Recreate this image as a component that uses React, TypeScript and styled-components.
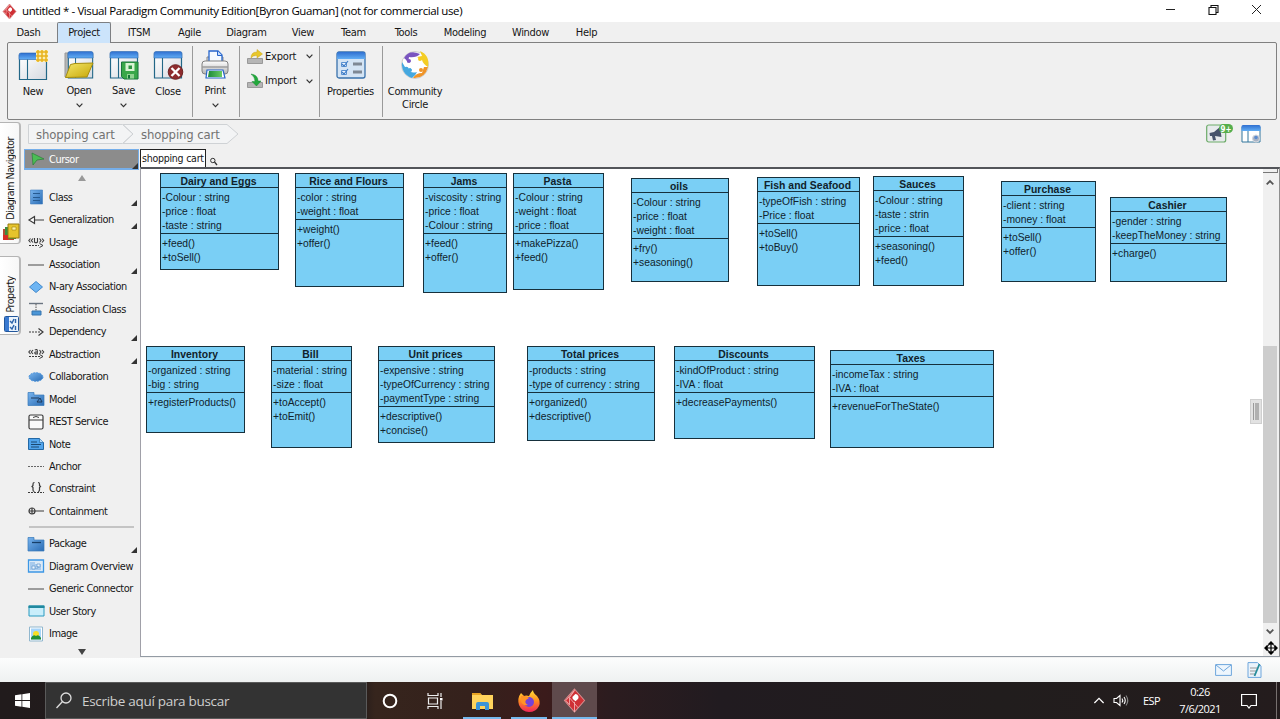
import React from "react";
import styled, { createGlobalStyle, css } from "styled-components";

const ui = '"DejaVu Sans Condensed", "DejaVu Sans", sans-serif';
const segoe = '"Open Sans", "Noto Sans", sans-serif';

const Global = createGlobalStyle`
  * { box-sizing: border-box; }
  body { margin: 0; overflow: hidden; background: #f0f0f0; }
  svg { display: block; flex: none; overflow: visible; }
`;

const Window = styled.div`
  display: flex;
  flex-direction: column;
  width: 1280px;
  height: 719px;
  background: #f0f0f0;
  color: #161616;
  font-family: ${ui};
  font-size: 11px;
  font-stretch: condensed;
  white-space: nowrap;
`;

/* Title bar */
const TitleBar = styled.header`
  display: flex;
  align-items: center;
  height: 22px;
  padding-left: 2px;
  background: #fff;
`;
const Title = styled.span`
  flex: 1;
  margin-left: 5px;
  font: 11.5px/20px ${segoe};
  letter-spacing: -0.4px;
  color: #000;
`;
const WindowButtons = styled.div`
  display: flex;
  gap: 30px;
  padding-right: 17px;
  align-self: flex-start;
  padding-top: 3px;
`;

/* Menu */
const MenuBar = styled.nav`
  display: flex;
  height: 20px;
  position: relative;
  z-index: 1;
  letter-spacing: -0.3px;
`;
const MenuItem = styled.div<{ $w: number; $active?: boolean }>`
  width: ${(p) => p.$w}px;
  text-align: center;
  line-height: 21px;
  ${(p) =>
    p.$active &&
    css`
      height: 21px;
      background: #cce4fb;
      border: 1px solid #7d7f82;
      border-bottom: 0;
      border-radius: 2px 2px 0 0;
      line-height: 19px;
    `}
`;

/* Ribbon */
const Ribbon = styled.section`
  display: flex;
  height: 78px;
  margin: 0 3px 0 7px;
  border: 1px solid #808080;
  border-radius: 2px;
`;
const Group = styled.div<{ $w: number; $last?: boolean }>`
  display: flex;
  width: ${(p) => p.$w}px;
  height: 71px;
  margin-top: 3px;
  border-right: ${(p) => (p.$last ? "0" : "1px solid #9a9a9a")};
`;
const BigButton = styled.div<{ $w: number }>`
  display: flex;
  flex-direction: column;
  align-items: center;
  width: ${(p) => p.$w}px;
  padding: 4px 0 0 1px;
  text-align: center;
`;
const BigLabel = styled.span<{ $low?: boolean }>`
  margin: ${(p) => (p.$low ? 5 : 4)}px 0 6px;
  line-height: 13px;
  letter-spacing: -0.32px;
`;
const SmallStack = styled.div`
  display: flex;
  flex-direction: column;
  padding-left: 7px;
  margin-top: -2px;
`;
const SmallButton = styled.div`
  display: flex;
  align-items: center;
  width: 66px;
  height: 24.5px;
  gap: 2px;
  & > span { width: 40px; letter-spacing: -0.2px; }
`;

/* Body */
const Body = styled.main`
  display: flex;
  height: 538px;
`;
const Rail = styled.aside`
  display: flex;
  flex-direction: column;
  width: 23px;
  padding-top: 2px;
  gap: 12px;
`;
const RailTab = styled.div<{ $h: number }>`
  display: flex;
  flex-direction: column;
  align-items: center;
  justify-content: flex-end;
  width: 21px;
  height: ${(p) => p.$h}px;
  padding: 0 0 2px 1px;
  gap: 3px;
  border: 1px solid #b4b4b4;
  border-left: 0;
  border-right: 2px solid #b9b9b9;
  border-radius: 0 4px 4px 0;
  background: linear-gradient(90deg, #fff, #f7f7f7);
  & > svg { margin-left: 2px; }
`;
const RailText = styled.span`
  writing-mode: vertical-rl;
  transform: rotate(180deg);
  font-size: 10.5px;
  line-height: 14px;
  letter-spacing: -0.42px;
`;
const Main = styled.div`
  display: flex;
  flex-direction: column;
  width: 1257px;
`;
const CrumbBar = styled.div`
  display: flex;
  justify-content: space-between;
  height: 29px;
  padding: 3px 19px 0 5px;
`;
const Crumbs = styled.div`
  display: flex;
  height: 22px;
`;
const Crumb = styled.div<{ $w: number }>`
  display: grid;
  width: ${(p) => p.$w}px;
  & > * { grid-area: 1 / 1; }
  & > span {
    padding-left: 8px;
    color: #727272;
    font-size: 13px;
    line-height: 23px;
    letter-spacing: -0.12px;
  }
`;
const CrumbActions = styled.div`
  display: flex;
  gap: 8px;
`;
const Workspace = styled.div`
  display: flex;
  height: 509px;
`;

/* Palette */
const Palette = styled.aside`
  width: 117px;
`;
const CursorRow = styled.div`
  display: flex;
  align-items: center;
  position: relative;
  width: 115px;
  height: 21px;
  margin: 0 0 0 1px;
  padding-left: 5px;
  gap: 4px;
  background: #8c8c8c;
  border: 2px solid #75aeea;
  border-width: 1px 1px 2px;
  color: #fff;
`;
const ArrowRow = styled.div<{ $h: number }>`
  display: flex;
  justify-content: center;
  align-items: center;
  height: ${(p) => p.$h}px;
`;
const Tool = styled.div`
  display: flex;
  align-items: center;
  position: relative;
  height: 22.45px;
  padding-left: 5px;
  gap: 5px;
  & > svg { width: 16px; height: 16px; }
`;
const ToolLabel = styled.span`
  padding-top: 1px;
  line-height: 14px;
  font-size: 10.9px;
  letter-spacing: -0.46px;
`;
const Corner = styled.i<{ $row?: boolean }>`
  position: absolute;
  right: ${(p) => (p.$row ? 0 : 3)}px;
  bottom: ${(p) => (p.$row ? -1 : 2)}px;
  border: 3.5px solid;
  border-color: transparent #333 #333 transparent;
`;
const Divider = styled.hr`
  height: 2px;
  margin: 3px 6px 5px;
  border: 0;
  background: #c4c4c4;
`;

/* Diagram */
const Editor = styled.section`
  width: 1140px;
`;
const Tabs = styled.div`
  display: flex;
  height: 18px;
  gap: 4px;
`;
const Tab = styled.div`
  width: 66px;
  padding-left: 1px;
  border: 1px solid #222;
  border-bottom: 0;
  background: #fff;
  font-size: 10.5px;
  line-height: 17px;
  letter-spacing: -0.24px;
`;
const CanvasFrame = styled.div`
  display: flex;
  height: 490px;
  border-top: 2px solid #53555a;
  border-left: 1px solid #a0a0a8;
  border-bottom: 1px solid #939ba4;
  border-right: 1px solid #8f8f8f;
`;
const Canvas = styled.div`
  position: relative;
  flex: 1;
  background: #fff;
`;
const Handle = styled.div`
  position: absolute;
  right: 1px;
  top: 230px;
  display: flex;
  justify-content: center;
  gap: 1px;
  width: 12px;
  height: 25px;
  padding: 3px 2px;
  border: 1px solid #cfcfcf;
  background: #e2e2e2;
  &::before { content: ""; width: 1px; background: #9a9a9a; }
  &::after { content: ""; width: 4px; background: #b0b0b0; }
`;
const ScrollBar = styled.div`
  display: flex;
  flex-direction: column;
  align-items: flex-start;
  width: 16px;
  background: #f0f0f0;
`;
const SplitNub = styled.div`
  width: 15px;
  height: 4px;
  border-bottom: 1px solid #777;
  border-right: 1px solid #777;
`;
const ScrollButton = styled.div<{ $h: number; $w?: number }>`
  display: flex;
  align-items: center;
  justify-content: center;
  width: ${(p) => p.$w ?? 14}px;
  height: ${(p) => p.$h}px;
`;
const Track = styled.div`
  display: flex;
  flex-direction: column;
  justify-content: flex-end;
  flex: 1;
  width: 14px;
`;
const Thumb = styled.div`
  height: 277px;
  background: #cdcdcd;
`;

const Node = styled.article<{ $x: number; $y: number; $w: number; $h: number }>`
  position: absolute;
  left: ${(p) => p.$x - 141}px;
  top: ${(p) => p.$y - 169}px;
  width: ${(p) => p.$w}px;
  height: ${(p) => p.$h}px;
  border: 1px solid #16303c;
  background: #7acff5;
  color: #10222b;
  font: 10.3px/14px "Liberation Sans", Arial, sans-serif;
  letter-spacing: 0.01px;
`;
const NodeTitle = styled.h3`
  height: 14px;
  margin: 0;
  padding-right: 2px;
  border-bottom: 1px solid #16303c;
  font-size: 10.4px;
  line-height: 15px;
  text-align: center;
  letter-spacing: 0.04px;
`;
const Compartment = styled.div<{ $line?: boolean }>`
  padding: 3px 0 0 1px;
  border-bottom: ${(p) => (p.$line ? "1px solid #16303c" : "0")};
  & > div { height: 14px; }
`;

/* Status and taskbar */
const StatusBar = styled.div`
  display: flex;
  justify-content: flex-end;
  align-items: center;
  height: 24px;
  padding: 0 18px 1px 0;
  gap: 15px;
  background: linear-gradient(#fcfdfd, #eef1f1);
`;
const Taskbar = styled.footer`
  display: flex;
  height: 37px;
  background: linear-gradient(90deg, #211b1c 0, #241c1b 360px, #36251d 375px, #35211c 470px, #3b1b1b 545px, #2c1c1f 610px, #211b20 720px, #211d1d 1000px, #241c1d 1280px);
  color: #fff;
  font-family: ${segoe};
  font-stretch: normal;
`;
const Start = styled.div`
  display: flex;
  align-items: center;
  width: 45px;
  padding-left: 15px;
`;
const Search = styled.div`
  display: flex;
  align-items: center;
  width: 322px;
  padding-left: 10px;
  gap: 10px;
  border: 1px solid #5a5a5a;
  background: #333;
  color: #cfcfcf;
  font-size: 13.5px;
  letter-spacing: -0.3px;
`;
const TaskButton = styled.div<{ $w: number; $open?: boolean; $active?: boolean }>`
  display: flex;
  align-items: center;
  justify-content: center;
  position: relative;
  width: ${(p) => p.$w}px;
  background: ${(p) => (p.$active ? "#5f4a4c" : "transparent")};
  &::after {
    content: "";
    display: ${(p) => (p.$open ? "block" : "none")};
    position: absolute;
    bottom: 0;
    left: ${(p) => (p.$active ? 0 : 5)}px;
    right: ${(p) => (p.$active ? 0 : 5)}px;
    height: 2px;
    background: #76b9ed;
  }
`;
const Tray = styled.div`
  display: flex;
  align-items: center;
  margin-left: auto;
  padding-right: 3px;
  font-size: 11px;
  & > svg + svg { margin-left: 8px; }
`;
const Lang = styled.span`
  width: 19px;
  margin: 0 14px 0 13px;
  letter-spacing: -0.6px;
`;
const Clock = styled.div`
  width: 48px;
  margin-right: 17px;
  text-align: center;
  line-height: 16.500px;
  letter-spacing: -0.55px;
`;
const ShowDesktop = styled.div`
  width: 1px;
  height: 37px;
  margin-left: 19px;
  background: #77706f;
`;

const Logo = ({ size }: { size: number }) => (
  <svg width={size} height={size} viewBox="0 0 16 16">
    <path d="M8 0 15 8 8 16 1 8Z" fill="#cf3035" stroke="#d98f90" strokeWidth=".7" />
    <path d="M6.500 5.500 8.600 3.400C10.400 3.600 11.400 5.400 10.400 7L8.700 8.600 6.800 7z" fill="#fff" />
    <path d="M8 1 4.500 6v5L2 8ZM4.500 6l6 7M8 16V9" fill="none" stroke="#f2b3b3" strokeWidth=".6" />
  </svg>
);

const Chevron = ({ w = 7, color = "#333", up = false, stroke = 1.4 }) => (
  <svg width={w} height={w / 2 + 1} viewBox="0 0 8 5" fill="none" stroke={color} strokeWidth={stroke}>
    <path d={up ? "M.7 4.300 4 1 7.300 4.300" : "M.7.7 4 4 7.300.7"} />
  </svg>
);

const Defs = styled.svg`
  position: absolute;
`;
const Grads = () => (
  <Defs width="0" height="0">
    <defs>
      <linearGradient id="blue" x2="0" y2="1"><stop stopColor="#2f6fd0" /><stop offset="1" stopColor="#62aef5" /></linearGradient>
      <linearGradient id="pane" x2="1" y2="1"><stop stopColor="#fff" /><stop offset="1" stopColor="#d5d9e0" /></linearGradient>
      <linearGradient id="gold" x2="1" y2="1"><stop stopColor="#f4e76a" /><stop offset="1" stopColor="#c6a606" /></linearGradient>
      <linearGradient id="green" x2="1" y2="0"><stop stopColor="#1d8a3c" /><stop offset="1" stopColor="#68cb62" /></linearGradient>
      <linearGradient id="tool" x2="1" y2="1"><stop stopColor="#78b4ee" /><stop offset="1" stopColor="#2a6cb4" /></linearGradient>
      <linearGradient id="grey" x2="0" y2="1"><stop stopColor="#fff" /><stop offset="1" stopColor="#b4b4b4" /></linearGradient>
      <linearGradient id="fox" x2="0" y2="1"><stop stopColor="#ffe13a" /><stop offset=".5" stopColor="#ff8a1f" /><stop offset="1" stopColor="#f0245c" /></linearGradient>
    </defs>
  </Defs>
);

const Pane = () => (
  <>
    <path d="M1.5 4h27v24h-27z" fill="url(#pane)" stroke="#226787" strokeWidth="1.2" />
    <path d="M1 3.500q0-2 2-2h24q2 0 2 2V8H1z" fill="url(#blue)" stroke="#2966ae" strokeWidth=".6" />
    <path d="M9.500 8v20" stroke="#226787" strokeWidth="1.100" />
  </>
);
const NewIcon = () => (
  <svg width="30" height="30" viewBox="0 0 30 30">
    <g transform="translate(0 1.500)"><Pane /></g>
    <path d="M18 0h12v12H18z" fill="#fbeeb5" />
    <path d="M20 0v12M24 0v12M28 0v12M18 2h12M18 6h12M18 10h12" stroke="#e8b21c" strokeWidth="1.500" />
  </svg>
);
const OpenIcon = () => (
  <svg width="30" height="30" viewBox="0 0 30 30">
    <path d="M1 3h5v24H1z" fill="#b5b5b5" stroke="#999" />
    <g transform="translate(3 0) scale(.9 1)"><Pane /></g>
    <path d="m6.500 14.500 4.500-1 18-.5-6 14-21.500.5z" fill="url(#gold)" stroke="#a68d0c" />
  </svg>
);
const SaveIcon = () => (
  <svg width="30" height="30" viewBox="0 0 30 30">
    <Pane />
    <path d="M12.500 12H29v17H15l-2.500-2.500z" fill="#39a749" stroke="#19773c" />
    <path d="M16.500 13h9v8h-9z" fill="#d9f4d4" /><path d="M19.500 15.500h3.500v3.500h-3.500z" fill="#2c9443" />
    <path d="M18 24h7v4.500h-7z" fill="#8fd390" /><path d="M19 25h2v3.500h-2z" fill="#14743a" />
  </svg>
);
const CloseIcon = () => (
  <svg width="30" height="30" viewBox="0 0 30 30">
    <Pane />
    <circle cx="22.500" cy="22" r="7.300" fill="#8e2b2e" stroke="#6e2525" />
    <path d="m18.500 18 8 8m0-8-8 8" stroke="#fff" strokeWidth="2.300" />
  </svg>
);
const PrintIcon = () => (
  <svg width="30" height="30" viewBox="0 0 30 30">
    <path d="M7 14V7h16v7" fill="#ddd" stroke="#888" />
    <path d="M9 1h9l4 4v8H9z" fill="#f4faff" stroke="#2665cc" strokeWidth="1.300" /><path d="M17.500 1v4.500H22" fill="#c1dbfa" stroke="#2665cc" />
    <rect x="2" y="11" width="26" height="13" rx="3" fill="url(#grey)" stroke="#808080" />
    <path d="M2 17h26" stroke="#9a9a9a" strokeWidth="1.400" />
    <path d="M7 20h16l2 8H6z" fill="#fff" stroke="#2464c8" strokeWidth="1.200" /><path d="M9 21h13v6H8z" fill="url(#green)" />
  </svg>
);
const PropsIcon = () => (
  <svg width="30" height="30" viewBox="0 0 30 30">
    <rect x="1" y="2" width="28" height="26" rx="2" fill="#d4e4f4" stroke="#3971ac" strokeWidth="1.300" />
    <path d="M1 4q0-2 2-2h24q2 0 2 2v5H1z" fill="url(#blue)" />
    <path d="M5.500 12.500h5v4h-5zm0 8h5v4h-5z" fill="#eef6ff" stroke="#5a91d0" />
    <path d="m6 14 2 2 4-5m-6 11 2 2 4-5" fill="none" stroke="#3d7cc7" strokeWidth="1.200" />
    <path d="M17 14h9M17 22h9" stroke="#7e8894" strokeWidth="3.200" />
  </svg>
);
const CommunityIcon = () => (
  <svg width="30" height="30" viewBox="0 0 30 30">
    <circle cx="15" cy="15" r="13.500" fill="#fff" stroke="#ccc" />
    <path d="M4 8Q9-1 20 4q-4 4-11 3l-1 6q-2-4-4-5z" fill="#7a55c0" />
    <path d="M20 1q10 4 8 16-5-3-6-7l-5-3 5-1z" fill="#f4cd24" />
    <path d="M28 17q-3 12-15 11 3-5 9-5l2-6z" fill="#ef9428" />
    <path d="M12 28Q1 24 2 12l3 5q3-1 4 2 1 5 8 3-1 3-5 6z" fill="#45a8df" />
    <circle cx="9" cy="11" r="2" fill="#7a55c0" /><circle cx="20" cy="9" r="2" fill="#f4cd24" />
    <circle cx="21" cy="20" r="2" fill="#ef9428" /><circle cx="10" cy="20" r="2" fill="#45a8df" />
    <circle cx="15" cy="15" r="5.200" fill="#fff" />
  </svg>
);
const ExportIcon = () => (
  <svg width="16" height="15" viewBox="0 0 16 15">
    <path d="M.5 9.500h15v5H.5z" fill="#b5b5b5" stroke="#999" />
    <path d="M4 9q0-6 6-6V.5L15.500 5 10 9V6.500Q6 6 4 9z" fill="#e8c72b" stroke="#c8a21b" strokeWidth=".5" />
  </svg>
);
const ImportIcon = () => (
  <svg width="16" height="15" viewBox="0 0 16 15">
    <path d="M.5 9.500h15v5H.5z" fill="#b5b5b5" stroke="#999" />
    <path d="M4 1q7 1 7 7h3L9.500 13 5 8.500h3Q8 4 4 1z" fill="#22a83b" stroke="#178a32" strokeWidth=".5" />
  </svg>
);

const line = "#3a3a3a";
const icons: Record<string, React.ReactNode> = {
  Class: <><path d="M2.500 1h12v14h-12z" fill="url(#tool)" stroke="#3d7cc0" strokeWidth=".6" /><path d="M5 4.500h7M5 8.500h7M5 11.500h7" stroke="#265a91" /></>,
  Generalization: <path d="M6.500 4.500 1 8l5.500 3.500zM6.500 8H16" fill="#fff" stroke={line} strokeWidth="1.200" />,
  Usage: <><path d="M2.500 4.500.8 6.500l1.700 2M5 4.500l-1.700 2 1.700 2M6.500 4v4q1.500 1.500 3 0V4M11.500 4.500l1.500 2-1.500 2M14 4.500l1.700 2-1.700 2" fill="none" stroke={line} strokeWidth="1.100" /><path d="M1 11.500h10" stroke={line} strokeDasharray="2 1" /><path d="m11.500 9.500 3.500 2-3.500 2" fill="none" stroke={line} /></>,
  Association: <path d="M0 8h16" stroke="#777" strokeWidth="1.400" />,
  "N-ary Association": <path d="m8 2.500 6.500 5.500L8 13.500 1.500 8z" fill="#6eb5f3" stroke="#4189cc" />,
  "Association Class": <><path d="M1 2.500h14" stroke="#6a7480" strokeWidth="1.400" /><path d="M8 3v7" stroke="#555" strokeDasharray="1.500 1" /><path d="M4 10h9v4H4z" fill="#4b96d7" stroke="#3674ae" /></>,
  Dependency: <><path d="M1 8h12" stroke={line} strokeDasharray="2 1" /><path d="M10.500 4.500 15 8l-4.500 3.500" fill="none" stroke={line} strokeWidth="1.200" /></>,
  Abstraction: <><path d="M2.500 4 .8 6l1.700 2M5 4 3.300 6 5 8M6.800 4Q9.500 2.500 9.300 5v3H7.500q-1.500-1.500 0-2h2M11.500 4l1.500 2-1.500 2M14 4l1.700 2L14 8" fill="none" stroke={line} strokeWidth="1.100" /><path d="M1 10.500h12" stroke={line} strokeDasharray="2 1" /><path d="m11.500 8.500 3.500 2-3.500 2" fill="none" stroke={line} /></>,
  Collaboration: <ellipse cx="8" cy="8" rx="7" ry="4.300" fill="url(#tool)" stroke="#4a93db" strokeDasharray="2 1" />,
  Model: <><path d="M0 1.500h6V4h10v10.500H0z" fill="url(#tool)" stroke="#3778b9" strokeWidth=".7" /><path d="M3 7h8M9 11l3-4 2 4z" fill="none" stroke="#1f3958" /></>,
  "REST Service": <><rect x="1" y="1" width="14" height="14" rx="1.500" fill="#fafafa" stroke="#3b3b3b" strokeWidth="1.200" /><path d="M1 6h14M5 3.500q3-2 6 0" fill="none" stroke="#3b3b3b" /></>,
  Note: <><path d="M.5 2.500h11l4 4v7H.5z" fill="#50a4ec" stroke="#2368a5" /><path d="M11.500 2.500v4h4" fill="#b2dafa" stroke="#2368a5" strokeWidth=".7" /><path d="M3 6h6M3 8.500h10M3 11h8" stroke="#1c4870" /></>,
  Anchor: <path d="M0 8.500h16" stroke="#666" strokeDasharray="2 1" />,
  Constraint: <><path d="M6.500 1.500Q5 1.500 5 3v1.500L4 5.500l1 1V9q0 1.500 1.500 1.500M10 1.500q1.500 0 1.500 1.500v1.500l1 1-1 1V9q0 1.500-1.500 1.500" fill="none" stroke={line} strokeWidth="1.200" /><path d="M0 11.500h16" stroke={line} strokeDasharray="2 1" /></>,
  Containment: <><circle cx="4" cy="8" r="3" fill="none" stroke={line} strokeWidth="1.200" /><path d="M1 8h15M4 5v6" stroke={line} strokeWidth="1.200" /></>,
  Package: <><path d="M0 1.500h6V4h10v11H0z" fill="url(#tool)" stroke="#3778b9" strokeWidth=".7" /><path d="M4 6.500h9" stroke="#173f68" strokeWidth="1.300" /></>,
  "Diagram Overview": <><path d="M.5 2h15v12H.5z" fill="#dceaf7" stroke="#3c97e5" strokeWidth="1.300" /><path d="M2 4h5v2H2zM2 6h11v6H2z" fill="#a9cbed" /><path d="M4 8h3v3H4zm5-2h3v3H9zM7 10h3V8" fill="#eef6fd" stroke="#6399ce" strokeWidth=".7" /></>,
  "Generic Connector": <path d="M0 8h16" stroke="#777" strokeWidth="1.400" />,
  "User Story": <><path d="M1 3h15v10H1z" fill="#c9eefb" stroke="#2a9bc0" /><path d="M.5 2.500h16V5H.5z" fill="#20899f" /></>,
  Image: <><path d="M1.500 1h13v14h-13z" fill="#fff" stroke="#91b7ce" /><path d="M3 2.500h10v11H3z" fill="#a7d5fa" /><circle cx="8" cy="8" r="3" fill="#f8df25" /><path d="M3 12q2-4 5-2 3-2 5 2v1.500H3z" fill="#229038" /></>,
};

const toolsA = ["Class", "Generalization", "Usage", "Association", "N-ary Association", "Association Class", "Dependency", "Abstraction", "Collaboration", "Model", "REST Service", "Note", "Anchor", "Constraint", "Containment"];
const toolsB = ["Package", "Diagram Overview", "Generic Connector", "User Story", "Image"];
const expandable = ["Class", "Generalization", "Association", "Dependency", "Abstraction", "Package"];

const ToolRow = ({ name }: { name: string }) => (
  <Tool>
    <svg viewBox="0 0 16 16">{icons[name]}</svg>
    <ToolLabel>{name}</ToolLabel>
    {expandable.includes(name) && <Corner />}
  </Tool>
);

type ClassNode = [string, number, number, number, number, string[], string[]];
const nodes: ClassNode[] = [
  ["Dairy and Eggs", 160, 173, 119, 97, ["-Colour : string", "-price : float", "-taste : string"], ["+feed()", "+toSell()"]],
  ["Rice and Flours", 295, 173, 109, 114, ["-color : string", "-weight : float"], ["+weight()", "+offer()"]],
  ["Jams", 423, 173, 84, 120, ["-viscosity : string", "-price : float", "-Colour : string"], ["+feed()", "+offer()"]],
  ["Pasta", 513, 173, 91, 117, ["-Colour : string", "-weight : float", "-price : float"], ["+makePizza()", "+feed()"]],
  ["oils", 631, 178, 98, 104, ["-Colour : string", "-price : float", "-weight : float"], ["+fry()", "+seasoning()"]],
  ["Fish and Seafood", 757, 177, 103, 109, ["-typeOfFish : string", "-Price : float"], ["+toSell()", "+toBuy()"]],
  ["Sauces", 873, 176, 91, 110, ["-Colour : string", "-taste : strin", "-price : float"], ["+seasoning()", "+feed()"]],
  ["Purchase", 1001, 181, 95, 101, ["-client : string", "-money : float"], ["+toSell()", "+offer()"]],
  ["Cashier", 1110, 197, 117, 85, ["-gender : string", "-keepTheMoney : string"], ["+charge()"]],
  ["Inventory", 146, 346, 99, 87, ["-organized : string", "-big : string"], ["+registerProducts()"]],
  ["Bill", 271, 346, 81, 102, ["-material : string", "-size : float"], ["+toAccept()", "+toEmit()"]],
  ["Unit prices", 378, 346, 117, 97, ["-expensive : string", "-typeOfCurrency : string", "-paymentType : string"], ["+descriptive()", "+concise()"]],
  ["Total prices", 527, 346, 128, 95, ["-products : string", "-type of currency : string"], ["+organized()", "+descriptive()"]],
  ["Discounts", 674, 346, 141, 93, ["-kindOfProduct : string", "-IVA : float"], ["+decreasePayments()"]],
  ["Taxes", 830, 350, 164, 98, ["-incomeTax : string", "-IVA : float"], ["+revenueForTheState()"]],
];

const menu: [string, number][] = [
  ["Dash", 57], ["Project", 54], ["ITSM", 56], ["Agile", 45], ["Diagram", 69], ["View", 44],
  ["Team", 57], ["Tools", 48], ["Modeling", 70], ["Window", 61], ["Help", 51],
];

export default function App() {
  return (
    <Window>
      <Global />
      <Grads />
      <TitleBar>
        <Logo size={15} />
        <Title>untitled * - Visual Paradigm Community Edition[Byron Guaman] (not for commercial use)</Title>
        <WindowButtons>
          <svg width="13" height="13" viewBox="0 0 13 13"><path d="M2 6.500h9" stroke="#222" /></svg>
          <svg width="13" height="13" viewBox="0 0 13 13" fill="none" stroke="#111"><path d="M2 4.500h7v7H2zM4 4V2.500h7v7H9" strokeWidth="1.100" /></svg>
          <svg width="13" height="13" viewBox="0 0 13 13"><path d="m2 2 9 9m0-9-9 9" stroke="#222" /></svg>
        </WindowButtons>
      </TitleBar>
      <MenuBar>
        {menu.map(([m, w]) => <MenuItem key={m} $w={w} $active={m === "Project"}>{m}</MenuItem>)}
      </MenuBar>
      <Ribbon>
        <Group $w={185}>
          <BigButton $w={49}><NewIcon /><BigLabel $low>New</BigLabel></BigButton>
          <BigButton $w={43}><OpenIcon /><BigLabel>Open</BigLabel><Chevron /></BigButton>
          <BigButton $w={46}><SaveIcon /><BigLabel>Save</BigLabel><Chevron /></BigButton>
          <BigButton $w={43}><CloseIcon /><BigLabel $low>Close</BigLabel></BigButton>
        </Group>
        <Group $w={47}>
          <BigButton $w={43}><PrintIcon /><BigLabel>Print</BigLabel><Chevron /></BigButton>
        </Group>
        <Group $w={80}>
          <SmallStack>
            <SmallButton><ExportIcon /><span>Export</span><Chevron /></SmallButton>
            <SmallButton><ImportIcon /><span>Import</span><Chevron /></SmallButton>
          </SmallStack>
        </Group>
        <Group $w={63}>
          <BigButton $w={60}><PropsIcon /><BigLabel $low>Properties</BigLabel></BigButton>
        </Group>
        <Group $w={80} $last>
          <BigButton $w={63}><CommunityIcon /><BigLabel $low>Community<br />Circle</BigLabel></BigButton>
        </Group>
      </Ribbon>
      <Body>
        <Rail>
          <RailTab $h={122}>
            <RailText>Diagram Navigator</RailText>
            <svg width="17" height="18" viewBox="0 0 17 18">
              <path d="M0 6h11v11H0z" fill="#b84a35" /><path d="M2 4h11v12H2z" fill="#3d8b3f" /><path d="M5 1h11v14H5z" fill="#e6c42c" stroke="#967a12" />
              <path d="M9 4h4v3H9z" fill="#fff3a4" stroke="#a08012" strokeWidth=".6" /><path d="M0 12h5v5H0z" fill="#d62c24" />
            </svg>
          </RailTab>
          <RailTab $h={79}>
            <RailText>Property</RailText>
            <svg width="15" height="16" viewBox="0 0 15 16">
              <rect x=".5" y=".5" width="14" height="15" rx="1" fill="#eaf3fc" stroke="#22569b" /><path d="M1 1h4v14H1z" fill="#3979d0" />
              <path d="m6 5 2 2 2-4m-4 8 2 2 2-4M11.500 3v4m0 3v4" fill="none" stroke="#2c63aa" strokeWidth="1.400" />
            </svg>
          </RailTab>
        </Rail>
        <Main>
          <CrumbBar>
            <Crumbs>
              <Crumb $w={105}>
                <svg width="106" height="22" viewBox="0 0 106 22"><path d="M.5 1.500h94L105 11 94.500 20.500H.5z" fill="#f3f4f5" stroke="#cfd2d5" /></svg>
                <span>shopping cart</span>
              </Crumb>
              <Crumb $w={106}>
                <svg width="106" height="22" viewBox="0 0 106 22"><path d="M-10 1.500H94L105 11 94 20.500H-10L0 11z" fill="#f3f4f5" stroke="#cfd2d5" /></svg>
                <span>shopping cart</span>
              </Crumb>
            </Crumbs>
            <CrumbActions>
              <svg width="27" height="22" viewBox="0 0 27 22">
                <rect x=".7" y="2" width="19" height="17" rx="2" fill="#e7eaec" stroke="#6cab68" strokeWidth="1.200" />
                <path d="M3.500 10 8 9l6-5 1.500 10L9 13l1 4-3 .5-1-4.500H4z" fill="#46536b" />
                <rect x="13" y="1" width="14" height="9" rx="4.500" fill="#56ae4c" />
                <text x="20" y="8.500" textAnchor="middle" fontSize="8" fontWeight="700" fill="#fff">9+</text>
              </svg>
              <svg width="20" height="20" viewBox="0 0 20 20">
                <path d="M1 4h18v15H1z" fill="#fff" stroke="#31759b" /><path d="M.5 3.500q0-1.500 1.500-1.500h16q1.500 0 1.500 1.500V8H.5z" fill="url(#blue)" />
                <path d="M7 8v11" stroke="#31759b" /><circle cx="15" cy="15.500" r="3.500" fill="#a8b3c4" stroke="#d3d7de" /><circle cx="15" cy="14.500" r="1.700" fill="#5a8bd0" />
              </svg>
            </CrumbActions>
          </CrumbBar>
          <Workspace>
            <Palette>
              <CursorRow>
                <svg width="15" height="14" viewBox="0 0 15 14"><path d="m2 1 12 6-7 1-4 5z" fill="#4cbd55" stroke="#297d38" strokeWidth=".7" /></svg>
                <ToolLabel>Cursor</ToolLabel>
                <Corner $row />
              </CursorRow>
              <ArrowRow $h={16}><svg width="8" height="6" viewBox="0 0 8 6"><path d="m4 0 4 6H0z" fill="#999" /></svg></ArrowRow>
              {toolsA.map((t) => <ToolRow key={t} name={t} />)}
              <Divider />
              {toolsB.map((t) => <ToolRow key={t} name={t} />)}
              <ArrowRow $h={14}><svg width="8" height="6" viewBox="0 0 8 6"><path d="m4 6 4-6H0z" fill="#444" /></svg></ArrowRow>
            </Palette>
            <Editor>
              <Tabs>
                <Tab>shopping cart</Tab>
                <svg width="7" height="17" viewBox="0 0 7 17" fill="none" stroke="#333"><circle cx="2.800" cy="11.500" r="2.200" /><path d="m4.500 13 2.500 3" strokeWidth="1.300" /></svg>
              </Tabs>
              <CanvasFrame>
                <Canvas>
                  {nodes.map(([title, x, y, w, h, attrs, ops]) => (
                    <Node key={title} $x={x} $y={y} $w={w} $h={h}>
                      <NodeTitle>{title}</NodeTitle>
                      <Compartment $line>{attrs.map((a) => <div key={a}>{a}</div>)}</Compartment>
                      <Compartment>{ops.map((o) => <div key={o}>{o}</div>)}</Compartment>
                    </Node>
                  ))}
                  <Handle />
                </Canvas>
                <ScrollBar>
                  <SplitNub />
                  <ScrollButton $h={18}><Chevron w={8} color="#555" up stroke={1.8} /></ScrollButton>
                  <Track><Thumb /></Track>
                  <ScrollButton $h={17}><Chevron w={8} color="#555" stroke={1.8} /></ScrollButton>
                  <ScrollButton $h={16} $w={16}>
                    <svg width="14" height="14" viewBox="0 0 14 14"><circle cx="7" cy="7" r="4" fill="#f0f0f0" stroke="#000" strokeWidth="1.200" /><path d="m7 0 3 3H4zM7 14l3-3H4zM0 7l3-3v6zM14 7l-3-3v6z" /><path d="M7 2v10M2 7h10" stroke="#000" strokeWidth="1.200" /></svg>
                  </ScrollButton>
                </ScrollBar>
              </CanvasFrame>
            </Editor>
          </Workspace>
        </Main>
      </Body>
      <StatusBar>
        <svg width="17" height="12" viewBox="0 0 17 12"><path d="M.6.6h15.800v10.800H.6z" fill="#eef6fd" stroke="#6ea6dc" /><path d="m1 1 7.500 6L16 1" fill="none" stroke="#6ea6dc" /></svg>
        <svg width="15" height="16" viewBox="0 0 15 16"><path d="M1 .6h9.500L14 4v11.400H1z" fill="#eaf3fb" stroke="#6ea6dc" /><path d="M3 6h7M3 9h6M3 12h5" stroke="#999" /><path d="m12.500 2-5 12" stroke="#268d9b" strokeWidth="1.800" /></svg>
      </StatusBar>
      <Taskbar>
        <Start><svg width="15" height="15" viewBox="0 0 15 15" fill="#fff"><path d="M0 2.200 6.500 1.300V7H0zM7.300 1.200 15 0v7H7.300zM0 8h6.500v5.700L0 12.800zM7.300 8H15v7l-7.700-1.200z" /></svg></Start>
        <Search>
          <svg width="16" height="17" viewBox="0 0 16 17" fill="none" stroke="#ddd" strokeWidth="1.300"><circle cx="10" cy="6" r="5" /><path d="m6.500 9.500-6 6.500" /></svg>
          Escribe aquí para buscar
        </Search>
        <TaskButton $w={45}><svg width="16" height="16" viewBox="0 0 16 16"><circle cx="8" cy="8" r="6.300" fill="none" stroke="#fff" strokeWidth="2" /></svg></TaskButton>
        <TaskButton $w={46}><svg width="16" height="16" viewBox="0 0 16 16" fill="none" stroke="#eee" strokeWidth="1.200"><path d="M1 0v2.500h10V0M1.500 5h9v6h-9zM1 16v-2.500h10V16M14 0v4m0 4v8" /><path d="M13 5h2.500v2.500H13z" fill="#fff" stroke="none" /></svg></TaskButton>
        <TaskButton $w={48} $open><svg width="21" height="18" viewBox="0 0 21 18"><path d="M0 1h8l2 2h11v14H0z" fill="#ffd35c" /><path d="M0 1h8l1.500 2H0z" fill="#e8a322" /><path d="M4 18v-6q0-2 2-2h9q2 0 2 2v6h-4v-4H8v4z" fill="#3b94d8" /></svg></TaskButton>
        <TaskButton $w={46} $open>
          <svg width="22" height="22" viewBox="0 0 22 22">
            <path d="M3 3l3 3q2-1 5 0 1-3 4-6 0 3 4 6 4 5 2 10-3 6-10 6T1 15Q-1 8 3 3z" fill="url(#fox)" /><circle cx="11" cy="12" r="5" fill="#7542d8" /><path d="M3 6q4-1 8 2l-3 2q-2 3 2 5-6 1-7-4z" fill="#ff9326" />
          </svg>
        </TaskButton>
        <TaskButton $w={45} $open $active><Logo size={23} /></TaskButton>
        <Tray>
          <Chevron w={12} color="#fff" up stroke={0.9} />
          <svg width="17" height="13" viewBox="0 0 17 13" fill="none" stroke="#fff" strokeWidth="1.100"><path d="M1 4.500h2.500L7 1.500v10L3.500 8.500H1zM9 4.500q1.500 2 0 4M11 3q2.500 3.500 0 7" /><path d="M13 1.500q3.500 5 0 10" stroke="#888" /></svg>
          <Lang>ESP</Lang>
          <Clock>0:26<br />7/6/2021</Clock>
          <svg width="16" height="16" viewBox="0 0 16 16" fill="none" stroke="#fff" strokeWidth="1.200"><path d="M.6 1.500h14.800v11H10l-2 2.500-2-2.500H.6z" /></svg>
          <ShowDesktop />
        </Tray>
      </Taskbar>
    </Window>
  );
}
